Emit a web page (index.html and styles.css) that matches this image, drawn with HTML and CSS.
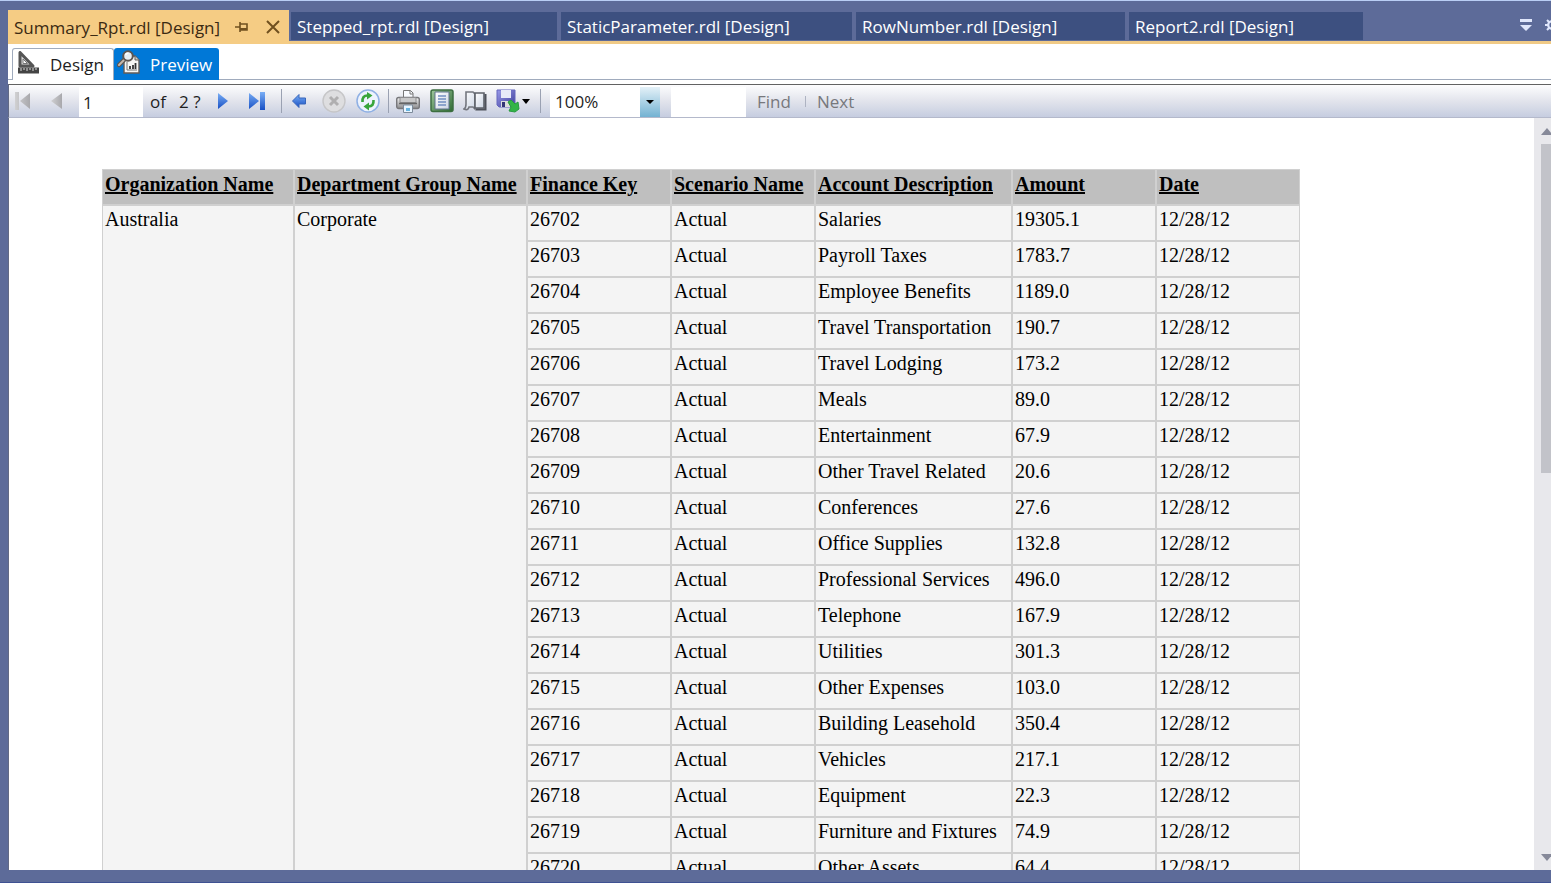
FILE: index.html
```html
<!DOCTYPE html>
<html lang="en">
<head>
<meta charset="utf-8">
<title>Summary_Rpt.rdl [Design]</title>
<link rel="stylesheet" href="styles.css">
</head>
<body>
<div class="window">
  <header class="docbar">
    <nav class="doctabs">
      <div class="doctab active">
        <a href="#">Summary_Rpt.rdl [Design]</a>
        <button class="tabbtn pin" aria-label="Pin"><svg width="14" height="12" viewBox="0 0 14 12"><path d="M0 6h5M5 1v10M5 3h7v6H5" fill="none" stroke="#70501f" stroke-width="1.6"/><path d="M5 7h7v2H5z" fill="#70501f"/></svg></button>
        <button class="tabbtn" aria-label="Close"><svg width="14" height="14" viewBox="0 0 14 14"><path d="M1 1l12 12M13 1L1 13" stroke="#70501f" stroke-width="2" fill="none"/></svg></button>
      </div>
      <a class="doctab t2" href="#">Stepped_rpt.rdl [Design]</a>
      <a class="doctab t3" href="#">StaticParameter.rdl [Design]</a>
      <a class="doctab t4" href="#">RowNumber.rdl [Design]</a>
      <a class="doctab t5" href="#">Report2.rdl [Design]</a>
    </nav>
    <div class="docactions">
      <button aria-label="Open documents"><svg width="12" height="12" viewBox="0 0 12 12"><path d="M0 0h12v3H0zM0 6h12l-6 6z" fill="#dfe6fb"/></svg></button>
      <button aria-label="Settings"><svg width="14" height="14" viewBox="0 0 14 14"><circle cx="7" cy="7" r="3.8" fill="none" stroke="#dfe6fb" stroke-width="2.2"/><path d="M7 0v3M7 11v3M0 7h3M11 7h3M2 2l2 2M10 10l2 2M2 12l2-2M10 4l2-2" stroke="#dfe6fb" stroke-width="2"/></svg></button>
    </div>
  </header>

  <main class="document">
    <div class="modes">
      <button class="mode design">
        <svg width="24" height="24" viewBox="0 0 24 24"><path d="M3 1.500v13.500h13z" fill="#ddd" stroke="#555" stroke-width="3" stroke-linejoin="round"/><path d="M6 8v4.500h4.500z" fill="#fff" stroke="#777"/><path d="M1 16.500h21v6H1z" fill="#444"/><path d="M4 17v3M7 17v2M10 17v3M13 17v2M16 17v3M19 17v2" stroke="#ddd"/></svg>
        <span>Design</span>
      </button>
      <button class="mode preview">
        <svg width="24" height="24" viewBox="0 0 24 24"><path d="M7 6h11l4 4v13H7z" fill="#f6f6f3" stroke="#635c58" stroke-width="1.4"/><path d="M18 6v4h4" fill="#ccc" stroke="#635c58"/><path d="M10 12v8h10" fill="none" stroke="#777"/><path d="M13 19v-3M16 19v-4M18.500 19v-6" stroke="#333" stroke-width="1.800"/><path d="M7 10l-5 5" stroke="#5d5550" stroke-width="4.500" stroke-linecap="round"/><path d="M7 10l-5 5" stroke="#c4b9ad" stroke-width="2" stroke-linecap="round"/><circle cx="11" cy="6" r="4.800" fill="#e6eef4" stroke="#5d5550" stroke-width="2"/><path d="M8.500 5q1-2 3-2" stroke="#fff" stroke-width="1.500" fill="none"/></svg>
        <span>Preview</span>
      </button>
    </div>

    <div class="toolbar">
      <svg width="0" height="0" class="defs"><defs>
        <linearGradient id="blue" x1="0" y1="0" x2="0" y2="1"><stop offset="0" stop-color="#79aef5"/><stop offset="1" stop-color="#174fc4"/></linearGradient>
        <linearGradient id="gray" x1="0" y1="0" x2="1" y2="0"><stop offset="0" stop-color="#d0d0d2"/><stop offset="1" stop-color="#a8a8ac"/></linearGradient>
        <linearGradient id="metal" x1="0" y1="0" x2="0" y2="1"><stop offset="0" stop-color="#f3f3f3"/><stop offset="1" stop-color="#8b8b8d"/></linearGradient>
        <linearGradient id="page" x1="0" y1="0" x2="1" y2="1"><stop offset="0" stop-color="#fff"/><stop offset="1" stop-color="#ccd5e4"/></linearGradient>
        <linearGradient id="green" x1="0" y1="0" x2="1" y2="1"><stop offset="0" stop-color="#9fc79d"/><stop offset="1" stop-color="#2d6a31"/></linearGradient>
        <linearGradient id="violet" x1="0" y1="0" x2="1" y2="1"><stop offset="0" stop-color="#9a9bea"/><stop offset="1" stop-color="#3d3d9a"/></linearGradient>
      </defs></svg>
      <button class="tool first" aria-label="First page"><svg width="16" height="18" viewBox="0 0 16 18"><path d="M0 0h4v18H0zM15 1v16L5 9z" fill="url(#gray)"/></svg></button>
      <button class="tool prev" aria-label="Previous page"><svg width="12" height="18" viewBox="0 0 12 18"><path d="M11 1v16L0 9z" fill="url(#gray)"/></svg></button>
      <input class="field pageno" type="text" value="1" aria-label="Page number">
      <span class="of">of</span><span class="total">2 ?</span>
      <button class="tool next" aria-label="Next page"><svg width="12" height="18" viewBox="0 0 12 18"><path d="M0 1v16l10-8z" fill="url(#blue)"/></svg></button>
      <button class="tool last" aria-label="Last page"><svg width="16" height="18" viewBox="0 0 16 18"><path d="M0 1v16l10-8zM11 0h5v18h-5z" fill="url(#blue)"/></svg></button>
      <i class="sep"></i>
      <button class="tool back" aria-label="Back"><svg width="14" height="14" viewBox="0 0 14 14"><path d="M.5 7L7 .5V4h6.500v6H7v3.500z" fill="url(#blue)" stroke="#3866bb"/></svg></button>
      <button class="tool stop" aria-label="Stop"><svg width="24" height="24" viewBox="0 0 24 24"><circle cx="12" cy="12" r="11" fill="#dedee0" stroke="#c6c6c8" stroke-width="1.400"/><path d="M8 8l8 8M16 8l-8 8" stroke="#b0afb0" stroke-width="3"/></svg></button>
      <button class="tool refresh" aria-label="Refresh"><svg width="24" height="24" viewBox="0 0 24 24"><circle cx="12" cy="12" r="11" fill="#edf3fd" stroke="#8fb0e4" stroke-width="1.500"/><path d="M6.500 13q-.5-6.500 5-6.500M17.500 11q.5 6.500-5 6.500" fill="none" stroke="#38a53b" stroke-width="2.600"/><path d="M11 3l5.500 3.500-5.500 4zM13 13.500v8l-5.500-4z" fill="#38a53b"/></svg></button>
      <i class="sep"></i>
      <button class="tool print" aria-label="Print"><svg width="24" height="24" viewBox="0 0 24 24"><path d="M7.500 10V1.500h7l2.500 2.500v6" fill="#f9fbff" stroke="#777"/><path d="M14 1.500V5h3" fill="none" stroke="#777"/><rect x=".7" y="8.500" width="22.600" height="11" rx="2" fill="url(#metal)" stroke="#77777b" stroke-width="1.400"/><path d="M4 8.500h16v5H4z" fill="#c8c8c9" stroke="#8e8e91"/><path d="M3 14.500h18" stroke="#666" stroke-width="1.500"/><path d="M7.500 16h9v7.500h-9z" fill="#e9f5ff" stroke="#7d8b9b"/><path d="M10 19h4v3h-4z" fill="#68b5e1"/></svg></button>
      <button class="tool layout" aria-label="Print layout" aria-pressed="true"><svg width="24" height="24" viewBox="0 0 24 24"><rect x="1" y="1" width="22" height="21.500" rx="2" fill="url(#green)" stroke="#3c6e41" stroke-width="1.500"/><path d="M5 3h14v17H5z" fill="url(#page)" stroke="#61738d"/><path d="M8 7h8M8 10h8M8 13h8M8 16h8" stroke="#718fc1" stroke-width="1.300"/></svg></button>
      <button class="tool setup" aria-label="Page setup"><svg width="24" height="22" viewBox="0 0 24 22"><path d="M3 2h7l2 2v15l-2-2H6q-1 4-5 2 2-1 2-5z" fill="url(#page)" stroke="#74777f" stroke-width="1.600"/><path d="M12 3h9v15h-9z" fill="url(#page)" stroke="#5d6169" stroke-width="1.600"/><path d="M22.500 4v15.500H13" fill="none" stroke="#4d515a" stroke-width="2"/></svg></button>
      <button class="tool save" aria-label="Export"><svg width="24" height="24" viewBox="0 0 24 24"><path d="M1 1h18v17H3l-2-2z" fill="url(#violet)" stroke="#6567bd"/><path d="M5 1h10v8H5z" fill="#e7eaf8"/><path d="M5 12h9v6H5z" fill="#ddd"/><path d="M6 13h3v5H6z" fill="#333577"/><path d="M12 13l3-2 4 4 3-2 1 7-4 3-6-1 2-4z" fill="#32b447" stroke="#289a40"/></svg><svg width="8" height="5" viewBox="0 0 8 5"><path d="M0 0h8L4 5z"/></svg></button>
      <i class="sep"></i>
      <span class="zoom"><select aria-label="Zoom"><option>100%</option></select><svg class="drop" width="20" height="30" viewBox="0 0 20 30"><path d="M6 13h8l-4 4z"/></svg></span>
      <input class="field search" type="text" aria-label="Find text">
      <button class="tool textbtn" disabled>Find</button>
      <i class="minisep"></i>
      <button class="tool textbtn" disabled>Next</button>
    </div>

    <div class="viewer">
      <div class="report">
        <table>
          <colgroup><col class="c-org"><col class="c-dept"><col class="c-std"><col class="c-std"><col class="c-acct"><col class="c-std"><col class="c-std"></colgroup>
          <thead><tr><th>Organization Name</th><th>Department Group Name</th><th>Finance Key</th><th>Scenario Name</th><th>Account Description</th><th>Amount</th><th>Date</th></tr></thead>
          <tbody>
            <tr><td rowspan="19">Australia</td><td rowspan="19">Corporate</td><td>26702</td><td>Actual</td><td>Salaries</td><td>19305.1</td><td>12/28/12</td></tr>
            <tr><td>26703</td><td>Actual</td><td>Payroll Taxes</td><td>1783.7</td><td>12/28/12</td></tr>
            <tr><td>26704</td><td>Actual</td><td>Employee Benefits</td><td>1189.0</td><td>12/28/12</td></tr>
            <tr><td>26705</td><td>Actual</td><td>Travel Transportation</td><td>190.7</td><td>12/28/12</td></tr>
            <tr><td>26706</td><td>Actual</td><td>Travel Lodging</td><td>173.2</td><td>12/28/12</td></tr>
            <tr><td>26707</td><td>Actual</td><td>Meals</td><td>89.0</td><td>12/28/12</td></tr>
            <tr><td>26708</td><td>Actual</td><td>Entertainment</td><td>67.9</td><td>12/28/12</td></tr>
            <tr><td>26709</td><td>Actual</td><td>Other Travel Related</td><td>20.6</td><td>12/28/12</td></tr>
            <tr><td>26710</td><td>Actual</td><td>Conferences</td><td>27.6</td><td>12/28/12</td></tr>
            <tr><td>26711</td><td>Actual</td><td>Office Supplies</td><td>132.8</td><td>12/28/12</td></tr>
            <tr><td>26712</td><td>Actual</td><td>Professional Services</td><td>496.0</td><td>12/28/12</td></tr>
            <tr><td>26713</td><td>Actual</td><td>Telephone</td><td>167.9</td><td>12/28/12</td></tr>
            <tr><td>26714</td><td>Actual</td><td>Utilities</td><td>301.3</td><td>12/28/12</td></tr>
            <tr><td>26715</td><td>Actual</td><td>Other Expenses</td><td>103.0</td><td>12/28/12</td></tr>
            <tr><td>26716</td><td>Actual</td><td>Building Leasehold</td><td>350.4</td><td>12/28/12</td></tr>
            <tr><td>26717</td><td>Actual</td><td>Vehicles</td><td>217.1</td><td>12/28/12</td></tr>
            <tr><td>26718</td><td>Actual</td><td>Equipment</td><td>22.3</td><td>12/28/12</td></tr>
            <tr><td>26719</td><td>Actual</td><td>Furniture and Fixtures</td><td>74.9</td><td>12/28/12</td></tr>
            <tr><td>26720</td><td>Actual</td><td>Other Assets</td><td>64.4</td><td>12/28/12</td></tr>
          </tbody>
        </table>
      </div>
      <div class="scrollbar">
        <svg width="12" height="7" viewBox="0 0 12 7"><path d="M0 7h12L6 0z" fill="#868999"/></svg>
        <div class="track"><div class="thumb"></div></div>
        <svg width="12" height="7" viewBox="0 0 12 7"><path d="M0 0h12L6 7z" fill="#868999"/></svg>
      </div>
    </div>
  </main>
</div>
</body>
</html>
```
FILE: styles.css
```css
* { box-sizing: border-box; }
body {
  margin: 0;
  font-family: "Open Sans", "Noto Sans", sans-serif;
  font-size: 17px;
  color: #1e1e1e;
}
button, input, select { font: inherit; color: inherit; margin: 0; padding: 0; border: 0; background: none; }
a { color: inherit; text-decoration: none; }
svg { display: block; flex: none; }

.window {
  height: 100vh;
  display: flex;
  flex-direction: column;
  overflow: hidden;
  background: #5d6b99;
  border-top: 1px solid #b9cef5;
  border-bottom: 1px solid #3f5192;
  padding: 0 0 12px 8px;
}

/* document tabs */
.docbar {
  display: flex;
  justify-content: space-between;
  height: 43px;
  padding-top: 9px;
  border-bottom: 3px solid #f0ca86;
  flex: none;
}
.doctabs { display: flex; gap: 4px; align-items: flex-start; }
.doctab {
  display: flex;
  align-items: center;
  height: 28px;
  margin-top: 2px;
  padding-left: 6px;
  background: #3d5080;
  color: #fff;
  white-space: nowrap;
}
.doctab.active {
  width: 281px;
  height: 34px;
  margin: 0 -2px 0 0;
  background: #f5cc84;
  color: #3b2a12;
}
.doctab.active a { flex: 1; }
.tabbtn { margin-right: 9px; }
.tabbtn.pin { margin-right: 17px; }
.t2 { width: 266px; }
.t3 { width: 291px; }
.t4 { width: 269px; }
.t5 { width: 234px; }
.docactions { display: flex; gap: 13px; align-items: center; margin-right: -8px; padding-bottom: 2px; }

/* design / preview switch */
.document { flex: 1; min-height: 0; display: flex; flex-direction: column; background: #fff; }
.modes {
  display: flex;
  align-items: flex-end;
  height: 36px;
  padding-left: 4px;
  border-bottom: 1px solid #a0abbd;
  flex: none;
}
.mode { display: flex; align-items: center; height: 32px; border-radius: 3px 3px 0 0; margin-bottom: -1px; }
.mode svg { margin-bottom: 4px; }
.design { width: 102px; gap: 9px; padding-left: 4px; border: 1px solid #a0abbd; border-bottom: 0; background: #fff; }
.preview { width: 105px; gap: 9px; padding-left: 3px; background: #0078d7; color: #fff; }

/* report toolbar */
.toolbar {
  display: flex;
  align-items: center;
  height: 34px;
  margin-top: 4px;
  padding-left: 6px;
  border-top: 1px solid #626262;
  border-bottom: 1px solid #b4b9cb;
  border-left: 1px solid #626a85;
  background: linear-gradient(#fdfdfe, #e2e4ec 50%, #c6cde0);
  flex: none;
}
.defs { position: absolute; }
.tool { display: flex; align-items: center; flex: none; }
.prev { margin: 0 16px 0 20px; }
.field { height: 30px; background: #fff; align-self: flex-end; }
.pageno { width: 64px; padding-left: 4px; }
.of { width: 29px; margin-left: 7px; }
.total { width: 39px; white-space: nowrap; }
.last { margin-left: 19px; }
.sep { width: 1px; height: 24px; margin: 0 7px 0 16px; background: #9aa1b2; flex: none; }
.back { margin: 0 16px 0 3px; }
.refresh { margin: 0 -8px 0 10px; }
.layout { margin: 0 9px 0 10px; }
.save { gap: 2px; margin: 0 -6px 0 9px; }
.zoom { position: relative; width: 110px; height: 32px; margin-left: 2px; background: #fff; flex: none; }
.zoom select { appearance: none; width: 100%; height: 100%; padding-left: 5px; }
.drop { position: absolute; right: 0; bottom: 0; background: linear-gradient(#e4f1f8, #73b2d2); pointer-events: none; }
.search { width: 75px; margin: 0 11px; }
.textbtn { color: #77787d; }
.minisep { width: 1px; height: 11px; margin: 0 11px 0 14px; background: #aeb3c2; }

/* rendered report */
.viewer { flex: 1; min-height: 0; display: flex; border-left: 1px solid #626a85; }
.report {
  flex: 1;
  min-width: 0;
  overflow: hidden;
  padding: 51px 0 0 93px;
  font: 20px/24px "Liberation Serif", "Times New Roman", serif;
  color: #000;
}
table { table-layout: fixed; width: 1198px; border: 0; border-spacing: 0; }
.c-org { width: 192px; }
.c-dept { width: 233px; }
.c-std { width: 144px; }
.c-acct { width: 197px; }
th, td {
  height: 36px;
  padding: 1px 2px 0;
  border: 1px solid #d0d0d0;
  text-align: left;
  vertical-align: top;
  white-space: nowrap;
  background: #f4f4f4;
}
th { padding-top: 2px; background: #bfbfbf; text-decoration: underline; }

.scrollbar {
  width: 17px;
  display: flex;
  flex-direction: column;
  padding: 10px 0 9px 7px;
  overflow: hidden;
  background: #e8e8ec;
  flex: none;
}
.track { flex: 1; padding: 9px 0; }
.thumb { height: 47%; background: #c2c3c9; }
```
